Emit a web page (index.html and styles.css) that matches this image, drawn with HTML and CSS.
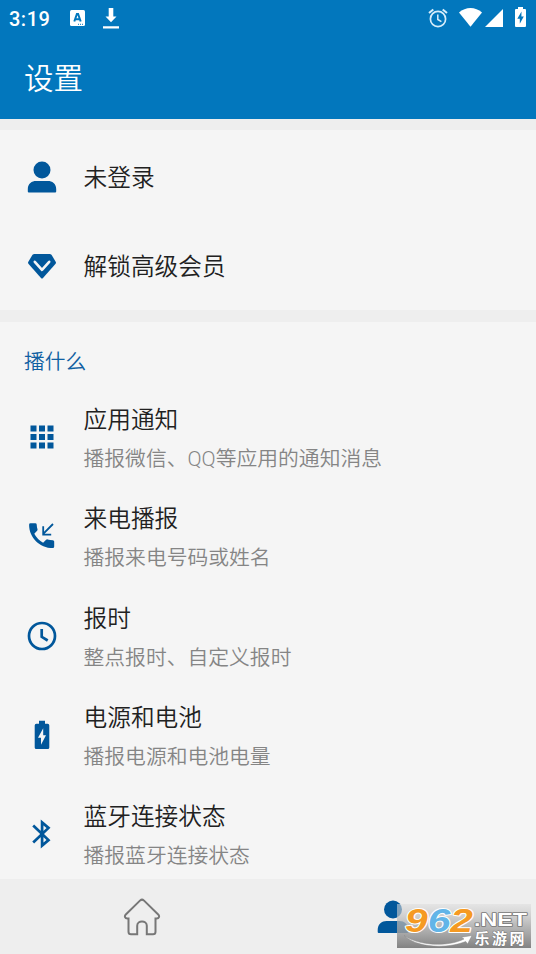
FILE: index.html
```html
<!DOCTYPE html>
<html lang="zh-CN">
<head>
<meta charset="utf-8">
<title>设置</title>
<link rel="stylesheet" href="styles.css">
</head>
<body>
<div class="screen">
  <header class="header">
    <div class="status">
      <span class="time">3:19</span>
      <svg class="st-app" width="15" height="16" viewBox="0 0 15 16"><rect width="15" height="16" rx="1.5" fill="#fff"/><path d="M4.300 11.500 6.900 4h1.200l2.600 7.500M5.400 9.200h4" fill="none" stroke="#0277bd" stroke-width="2"/><path d="M8 14.300h6" stroke="#0277bd" stroke-width="1" stroke-dasharray="1 1"/></svg>
      <svg class="st-down" width="16" height="21" viewBox="0 0 16 21"><path d="M5.700 0h4.600v8.500h3.200L8 14.300 2.500 8.500h3.200zM0 18.200h16v2.200H0z" fill="#fff"/></svg>
      <span class="spacer"></span>
      <svg class="st-alarm" width="20" height="20" viewBox="0 0 20 20" fill="none" stroke="#d7edfa"><circle cx="10" cy="11" r="7.600" stroke-width="1.700"/><path d="M1 5 5.300 1.400M19 5l-4.300-3.600" stroke-width="2"/><path d="M9.800 6.500v5l3.600 2.200" stroke-width="1.500"/></svg>
      <svg class="st-wifi" width="23" height="19" viewBox="0 0 23 19"><path d="M0 4.600C6.500-1.500 16.500-1.500 23 4.600L11.500 18.800z" fill="#fff"/></svg>
      <svg class="st-cell" width="18" height="18" viewBox="0 0 18 18"><path d="M18 0v18H0z" fill="#fff"/></svg>
      <svg class="st-batt" width="11" height="20" viewBox="0 0 11 20"><path d="M3 0h5v2h2q1 0 1 1v16q0 1-1 1H1q-1 0-1-1V3q0-1 1-1h2z" fill="#fff"/><path d="M6.500 4.500 2.300 11.700h2.500v5l4-7.200H6.400z" fill="#0277bd"/></svg>
    </div>
    <h1 class="heading">设置</h1>
  </header>

  <main class="content">
    <section class="card account">
      <div class="row single">
        <svg class="icon" viewBox="0 0 30 32" width="30" height="32"><circle cx="15" cy="9" r="8.500"/><path d="M.8 30.500V28C.8 22.500 5 20 9 20h12c4 0 8.200 2.500 8.200 8v2.500q0 1-1 1H1.800q-1 0-1-1z"/></svg>
        <span class="title">未登录</span>
      </div>
      <div class="row single">
        <svg class="icon" viewBox="0 0 30 30" width="30" height="30"><path d="M7 3h16l1.500.8 4.300 7.200q.5.900-.2 1.700L16 27q-1 1-2 0L1.400 12.700q-.7-.8-.2-1.700l4.300-7.200z"/><path d="m7.800 10.800 7.200 8 7.200-8" class="cut"/></svg>
        <span class="title">解锁高级会员</span>
      </div>
    </section>

    <section class="card options">
      <h2 class="label">播什么</h2>
      <div class="row">
        <svg class="icon" viewBox="0 0 30 30" width="30" height="30"><path d="M3.500 3.500h6v6h-6zm8.500 0h6v6h-6zm8.500 0h6v6h-6zM3.500 12h6v6h-6zm8.500 0h6v6h-6zm8.500 0h6v6h-6zM3.500 20.500h6v6h-6zm8.500 0h6v6h-6zm8.500 0h6v6h-6z"/></svg>
        <div class="text"><span class="title">应用通知</span><span class="sub">播报微信、QQ等应用的通知消息</span></div>
      </div>
      <div class="row">
        <svg class="icon" viewBox="0 0 30 30" width="30" height="30"><path d="M3.500 2.300h4.800q1.300 0 1.400 1.300.1 2.500.8 4.600.3.900-.4 1.600l-2.800 3q3 5.800 8.800 8.900l3-2.900q.7-.7 1.600-.4 2.200.7 5.200.8 1.300.1 1.300 1.400v5q0 1.500-1.400 1.500C12.500 27.100 2.100 16.500 2.100 3.700q0-1.400 1.400-1.400z"/><path d="m26 3-9.800 9.800m0-7.600v8.400h8" class="arrow"/></svg>
        <div class="text"><span class="title">来电播报</span><span class="sub">播报来电号码或姓名</span></div>
      </div>
      <div class="row">
        <svg class="icon line" viewBox="0 0 30 30" width="30" height="30"><circle cx="15" cy="15" r="13"/><path d="M14.700 8v7.800l6 3.700"/></svg>
        <div class="text"><span class="title">报时</span><span class="sub">整点报时、自定义报时</span></div>
      </div>
      <div class="row">
        <svg class="icon" viewBox="0 0 30 30" width="30" height="30"><path d="M12 .8h6v3h2.700q1.600 0 1.600 1.600v22q0 1.600-1.600 1.600H9.300q-1.600 0-1.600-1.600v-22q0-1.600 1.600-1.600H12z"/><path d="M16.200 8.300v7H19l-5 9.500v-7h-3z" class="hole"/></svg>
        <div class="text"><span class="title">电源和电池</span><span class="sub">播报电源和电池电量</span></div>
      </div>
      <div class="row">
        <svg class="icon blue" viewBox="0 0 30 30" width="30" height="30"><path d="m6.200 6.500 15.300 14.600-6.400 5.500V3.400l6.400 5.500L6.200 23.500"/></svg>
        <div class="text"><span class="title">蓝牙连接状态</span><span class="sub">播报蓝牙连接状态</span></div>
      </div>
    </section>
  </main>

  <nav class="nav">
    <div class="tab"><svg class="home" width="38" height="38" viewBox="0 0 38 38"><path d="M17.200 2.400q1.800-1.600 3.600 0L35.200 16.500c1.700 1.700.8 4-1.500 4h-1.200v13.200q0 2.500-2.500 2.500h-6.200v-8.500c0-5.500-9.600-5.500-9.600 0v8.500H8q-2.500 0-2.500-2.500V20.500H4.300c-2.300 0-3.200-2.300-1.500-4z"/></svg></div>
    <div class="tab"><svg class="me" width="32" height="34" viewBox="0 0 32 34"><circle cx="16" cy="9.500" r="9"/><path d="M.7 32v-2C.7 24 5 21 9.500 21h13c4.500 0 8.800 3 8.800 9v2q0 1-1 1H1.700q-1 0-1-1z"/></svg></div>
    <div class="watermark">
      <svg width="134" height="44" viewBox="0 0 134 44">
        <defs><linearGradient id="shade" x1="0" y1="0" x2="0" y2="1"><stop offset="0" stop-color="#ddd" stop-opacity=".55"/><stop offset=".5" stop-color="#aaa" stop-opacity=".8"/><stop offset="1" stop-color="#7c7c7c" stop-opacity=".95"/></linearGradient></defs>
        <rect width="134" height="44" fill="url(#shade)"/>
        <path class="smile" d="M7 31.500C22 42 51 43 67 35l-2.500-1.800L75 31.500 70.500 40l-1.700-2.500C50 45 20 44 7 31.500z"/>
        <g class="digits"><text x="8" y="27.500" textLength="68" lengthAdjust="spacingAndGlyphs"><tspan class="orange">9</tspan><tspan class="sky">6</tspan><tspan class="orange">2</tspan></text></g>
        <text x="77" y="21.500" textLength="53" lengthAdjust="spacingAndGlyphs" class="net">.NET</text>
        <text x="77.500" y="39.500" textLength="50" class="site">乐游网</text>
      </svg>
    </div>
  </nav>
</div>
</body>
</html>
```

FILE: styles.css
```css
* { box-sizing: border-box; }
body {
  margin: 0;
  font-family: Roboto, "Noto Sans CJK SC", sans-serif;
  background: #f5f5f5;
}
.screen {
  display: flex;
  flex-direction: column;
  width: 536px;
  height: 954px;
  overflow: hidden;
}
.header {
  flex: none;
  height: 119px;
  background: #0277bd;
  color: #fff;
}
.status {
  display: flex;
  align-items: flex-start;
  height: 38px;
  padding: 0 10px 0 9px;
}
.time {
  width: 61px;
  padding-top: 7px;
  font-size: 20px;
  line-height: 24px;
  font-weight: 500;
  letter-spacing: .5px;
}
.st-app { margin-top: 10px; }
.st-down { margin: 8px 0 0 18px; }
.spacer { flex: 1; }
.st-alarm { margin: 8px 11px 0 0; }
.st-wifi { margin: 8px 3px 0 0; }
.st-cell { margin: 9px 12px 0 0; }
.st-batt { margin-top: 7px; }
.heading {
  margin: 0;
  padding: 1px 0 0 24px;
  font-size: 29.500px;
  line-height: 80px;
  font-weight: 350;
}
.content {
  flex: 1;
  min-height: 0;
  display: flex;
  flex-direction: column;
  gap: 12px;
  padding-top: 11px;
  background: #eee;
}
.card { background: #f5f5f5; font-weight: 350; }
.account {
  flex: none;
  height: 180px;
  padding-top: 2px;
}
.options { flex: 1; }
.row {
  display: flex;
  align-items: flex-start;
  height: 99.300px;
  padding-left: 26.500px;
}
.single {
  height: 89px;
  align-items: center;
}
.single .title { padding-top: 2px; }
.icon {
  flex: none;
  width: 30px;
  margin-right: 27px;
  fill: #01579b;
}
.options .icon { margin-top: 33px; }
.cut { fill: none; stroke: #f5f5f5; stroke-width: 2.600; stroke-linecap: round; stroke-linejoin: round; }
.arrow { fill: none; stroke: #01579b; stroke-width: 1.800; }
.hole { fill: #f5f5f5; }
.line { fill: none; stroke: #01579b; stroke-width: 2.700; }
.blue { fill: none; stroke: #01579b; stroke-width: 2.700; }
.label {
  margin: 0;
  height: 67px;
  padding: 25px 0 0 24px;
  font-size: 20.700px;
  line-height: 30px;
  font-weight: 350;
  color: #1060a2;
}
.text {
  display: flex;
  flex-direction: column;
  padding-top: 13px;
}
.title {
  font-size: 23.700px;
  line-height: 36px;
  color: #212121;
}
.sub {
  margin-top: 6px;
  font-size: 20.800px;
  line-height: 30px;
  color: #858585;
}
.nav {
  position: relative;
  flex: none;
  display: flex;
  height: 75px;
  padding: 0 18px 0 16px;
  background: #eee;
}
.tab {
  flex: 1;
  display: flex;
  justify-content: center;
  align-items: center;
}
.home { fill: none; stroke: #777; stroke-width: 2; }
.me { fill: #01579b; }
.watermark {
  position: absolute;
  left: 397px;
  top: 25px;
  width: 134px;
  height: 44px;
}
.watermark svg { display: block; overflow: visible; }
.watermark text { paint-order: stroke; stroke-linejoin: round; }
.digits { font: italic 700 33px "Liberation Sans", sans-serif; stroke: #fff; stroke-width: 2px; }
.orange { fill: #f59a23; }
.sky { fill: #62b5e8; }
.net { font: 700 18px "Liberation Sans", sans-serif; fill: #fff; stroke: #777; stroke-width: 1.500px; }
.site { font: 700 15px "Noto Sans CJK SC", sans-serif; fill: #fff; stroke: #777; stroke-width: 1px; }
.smile { fill: #fff; stroke: #888; stroke-width: .5; }
```
